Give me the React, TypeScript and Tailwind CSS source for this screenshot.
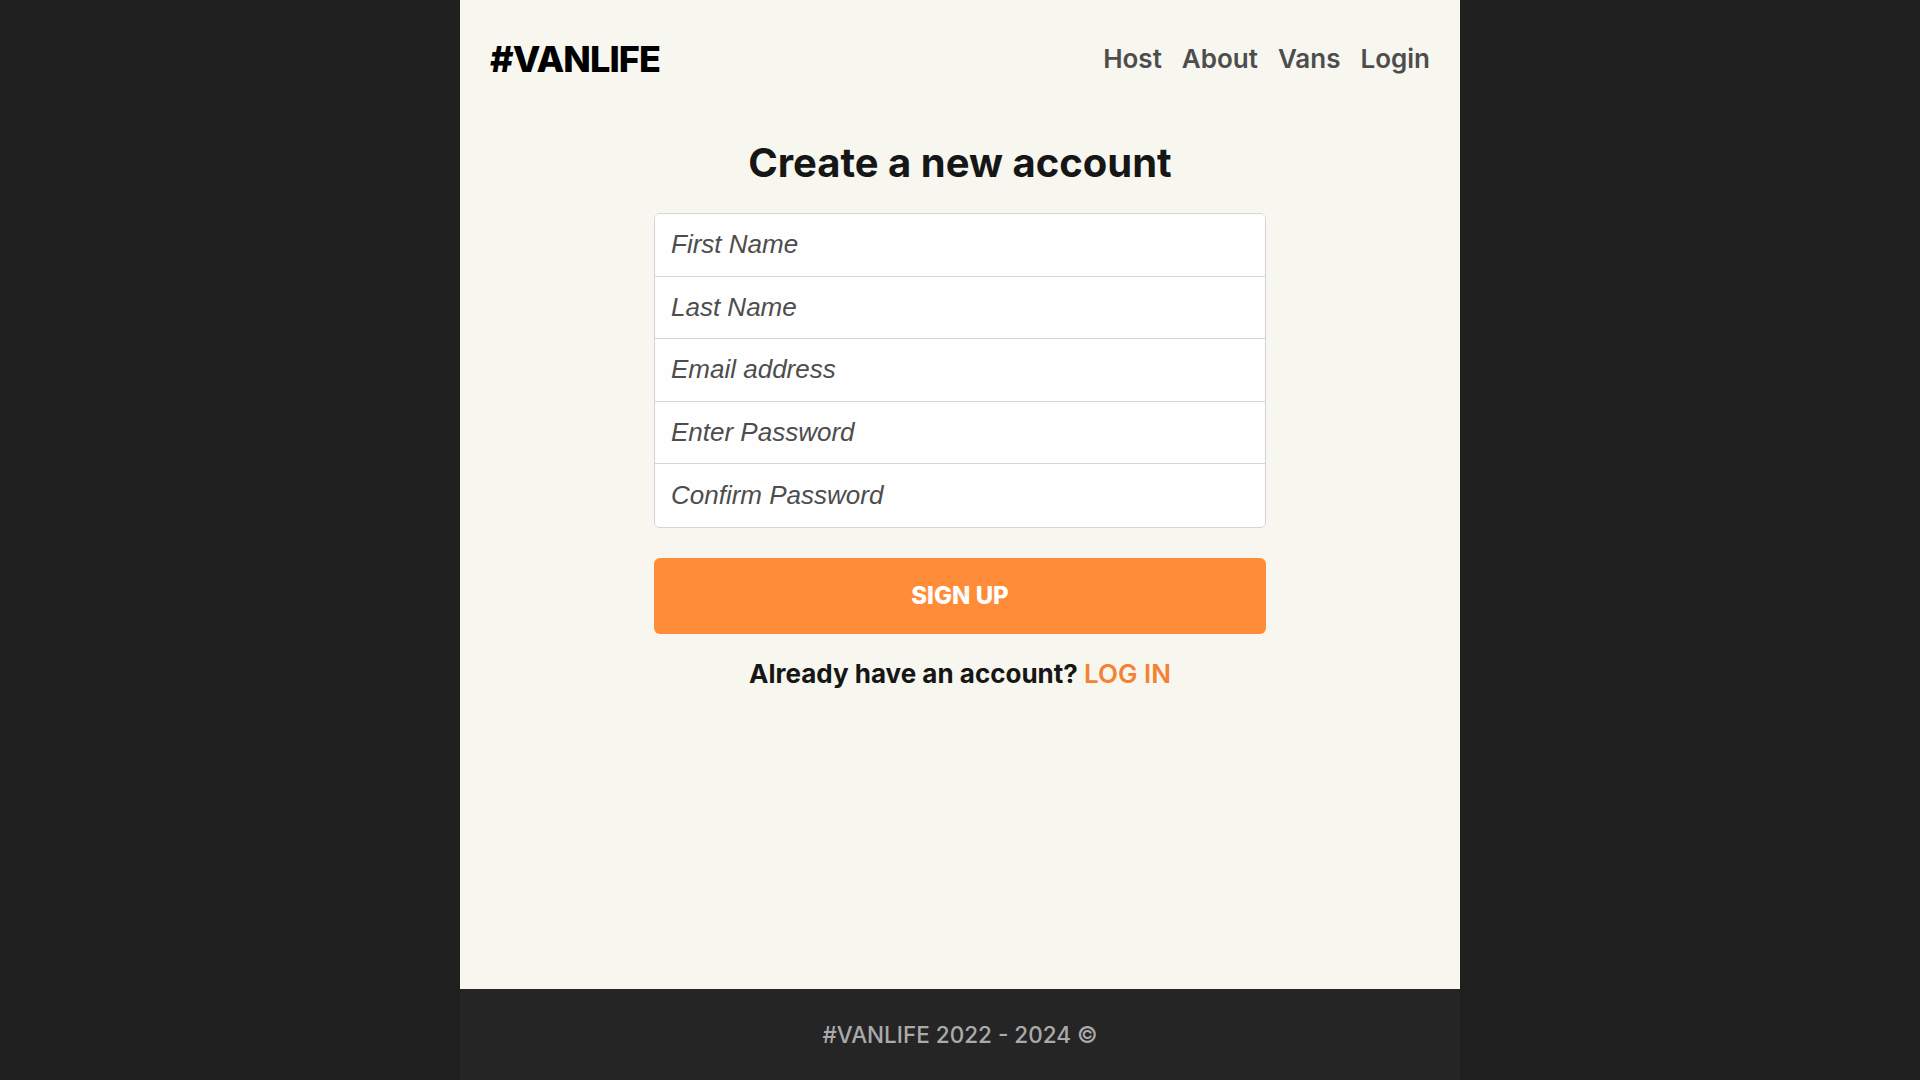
import React from "react";

const inter = { fontFamily: "Inter, 'Noto Sans', sans-serif" };

export default function App() {
  const fields = [
    { ph: "First Name", type: "text" },
    { ph: "Last Name", type: "text" },
    { ph: "Email address", type: "email" },
    { ph: "Enter Password", type: "password" },
    { ph: "Confirm Password", type: "password" },
  ];
  return (
    <div className="min-h-screen w-full bg-[#1f1f1f] flex justify-center" style={inter}>
      <div className="w-[1000px] min-h-screen flex flex-col bg-[#f7f7ef] font-['Inter',sans-serif]">
        <header className="h-[118px] flex items-center justify-between px-[30px]">
          <a className="text-[36px] font-extrabold text-black tracking-[-0.9px] leading-none">#VANLIFE</a>
          <nav className="flex items-center gap-[20px] text-[26px] font-semibold text-[#4d4d4d] leading-none">
            <a>Host</a>
            <a>About</a>
            <a>Vans</a>
            <a>Login</a>
          </nav>
        </header>
        <main className="flex-1 flex flex-col items-center pt-[21px]">
          <h1 className="text-[40px] leading-[48px] font-bold text-[#161616]">Create a new account</h1>
          <form className="w-[612px] mt-[26px] flex flex-col" onSubmit={(e) => e.preventDefault()}>
            <div className="flex flex-col border border-[#d1d5db] rounded-[6px] overflow-hidden bg-[#fefefe]">
              {fields.map((f, i) => (
                <input
                  key={f.ph}
                  type={f.type}
                  placeholder={f.ph}
                  className={
                    "h-[62.6px] px-[16px] bg-[#fefefe] outline-none text-[26px] font-['Liberation_Sans',Arial,sans-serif] text-[#161616] placeholder:italic placeholder:text-[#4d4d4d] " +
                    (i < fields.length - 1 ? "border-b border-[#d1d5db]" : "")
                  }
                />
              ))}
            </div>
            <button
              type="submit"
              className="mt-[30px] h-[76px] w-full rounded-[6px] bg-[#ff8c38] text-white text-[24px] font-extrabold leading-none"
            >
              SIGN UP
            </button>
          </form>
          <p className="mt-[24px] text-[26px] leading-[31px] font-bold text-[#161616]">
            Already have an account? <a className="text-[#f58232] font-semibold">LOG IN</a>
          </p>
        </main>
        <footer className="h-[91px] bg-[#252525] flex items-center justify-center text-[22.5px] font-medium text-[#aaaaaa]">
          #VANLIFE 2022 - 2024 ©
        </footer>
      </div>
    </div>
  );
}
